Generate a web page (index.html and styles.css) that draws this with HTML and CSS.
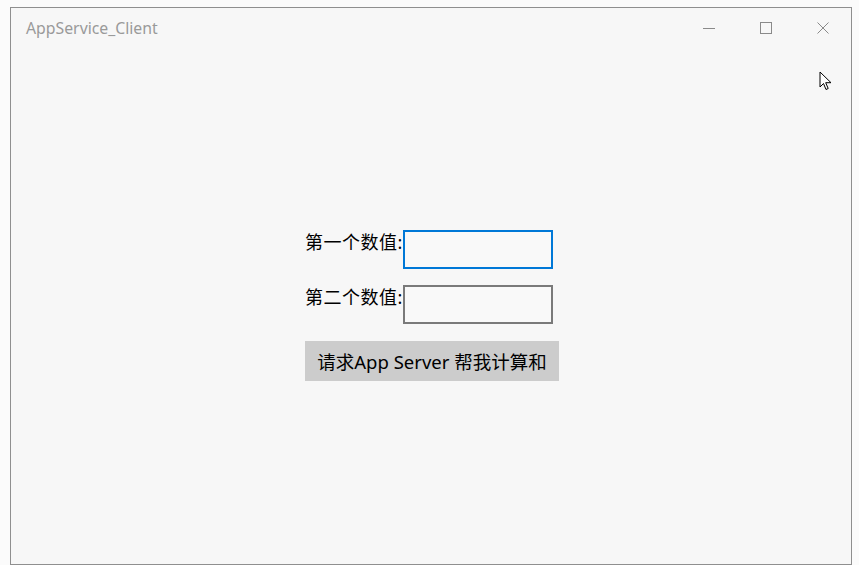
FILE: index.html
```html
<!DOCTYPE html>
<html lang="zh-CN">
<head>
  <meta charset="UTF-8" />
  <title>AppService_Client</title>
  <link rel="stylesheet" href="styles.css">
</head>
<body>
  <div class="window">
    <div class="titlebar">
      <span class="title">AppService_Client</span>
      <div class="controls">
        <span class="ctl">
          <svg width="14" height="14" viewBox="0 0 14 14"><path d="M1 7.5h12" stroke="#8a8a8a" stroke-width="1" fill="none"/></svg>
        </span>
        <span class="ctl">
          <svg width="14" height="14" viewBox="0 0 14 14"><rect x="1.5" y="1.5" width="11" height="11" stroke="#8a8a8a" stroke-width="1" fill="none"/></svg>
        </span>
        <span class="ctl">
          <svg width="14" height="14" viewBox="0 0 14 14"><path d="M1.5 1.5l11 11M12.5 1.5l-11 11" stroke="#8a8a8a" stroke-width="1" fill="none"/></svg>
        </span>
      </div>
    </div>
    <div class="content">
      <div class="form">
        <div class="row">
          <label class="label">第一个数值:</label>
          <div class="textbox focused"></div>
        </div>
        <div class="row">
          <label class="label">第二个数值:</label>
          <div class="textbox"></div>
        </div>
        <button class="btn">请求App Server 帮我计算和</button>
      </div>
    </div>
    <svg class="cursor" width="14" height="22" viewBox="0 0 14 22">
      <path d="M1 1v15l3.5-3.5 2.5 6 2.2-1-2.5-5.8H12z" fill="#fff" stroke="#000" stroke-width="1" stroke-linejoin="miter"/>
    </svg>
  </div>
</body>
</html>
```

FILE: styles.css
```css
body {
  margin: 0;
  background: #fbfbfb;
  font-family: "Noto Sans", "Noto Sans CJK SC", sans-serif;
}
.window {
  position: relative;
  margin: 7px 0 0 10px;
  width: 840px;
  height: 556px;
  border: 1px solid #8f8f8f;
  background: #f7f7f7;
  display: flex;
  flex-direction: column;
}
.titlebar {
  height: 32px;
  display: flex;
  align-items: center;
  justify-content: space-between;
}
.title {
  margin-left: 15px;
  margin-top: 7px;
  font-size: 15.8px;
  color: #9a9a9a;
}
.controls {
  display: flex;
  margin-top: 8px;
}
.ctl {
  width: 57px;
  display: flex;
  justify-content: center;
}
.content {
  flex: 1;
  display: flex;
  justify-content: center;
  align-items: center;
  padding-top: 6px;
  padding-left: 2px;
}
.form {
  display: flex;
  flex-direction: column;
  gap: 16px;
  width: 254px;
}
.row {
  display: flex;
  align-items: flex-start;
}
.label {
  font-size: 18px;
  letter-spacing: 0.5px;
  line-height: 24px;
  color: #000;
  white-space: nowrap;
}
.textbox {
  width: 146px;
  height: 35px;
  border: 2px solid #7a7a7a;
  background: #f9f9f9;
}
.textbox.focused {
  border-color: #0078d7;
}
.btn {
  margin-top: 1px;
  width: 254px;
  height: 40px;
  border: none;
  background: #cccccc;
  font-family: "Noto Sans", "Noto Sans CJK SC", sans-serif;
  font-size: 18.5px;
  color: #000;
  padding: 0;
}
.cursor {
  position: absolute;
  left: 808px;
  top: 63px;
}
```
